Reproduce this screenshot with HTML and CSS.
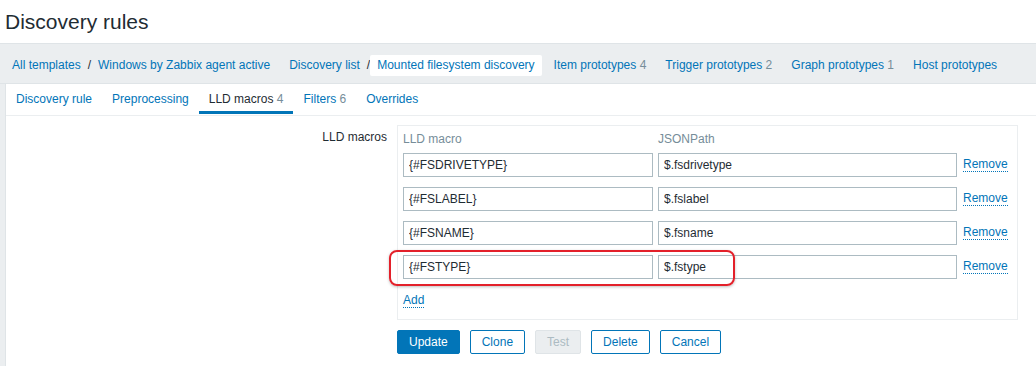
FILE: index.html
```html
<!DOCTYPE html>
<html lang="en">
<head>
    <meta charset="UTF-8">
    <title>Discovery rules</title>
    <link rel="stylesheet" href="styles.css">
</head>
<body>
    <header class="page-title">
        <h1>Discovery rules</h1>
    </header>

    <nav class="breadcrumbs">
        <ul>
            <li><a href="#">All templates</a></li>
            <li class="sep">/</li>
            <li><a href="#">Windows by Zabbix agent active</a></li>
        </ul>
        <ul>
            <li><a href="#">Discovery list</a></li>
            <li class="sep">/</li>
            <li class="selected"><a href="#">Mounted filesystem discovery</a></li>
        </ul>
        <ul>
            <li><a href="#">Item prototypes</a> <span class="count">4</span></li>
        </ul>
        <ul>
            <li><a href="#">Trigger prototypes</a> <span class="count">2</span></li>
        </ul>
        <ul>
            <li><a href="#">Graph prototypes</a> <span class="count">1</span></li>
        </ul>
        <ul>
            <li><a href="#">Host prototypes</a></li>
        </ul>
    </nav>

    <div class="wrapper">
        <div class="panel">
            <ul class="tabs">
                <li><a href="#">Discovery rule</a></li>
                <li><a href="#">Preprocessing</a></li>
                <li class="active"><a href="#">LLD macros</a> <span class="count">4</span></li>
                <li><a href="#">Filters</a> <span class="count">6</span></li>
                <li><a href="#">Overrides</a></li>
            </ul>

            <form class="form-grid" onsubmit="return false">
                <label class="form-label">LLD macros</label>
                <div class="macros-box">
                    <div class="macro-row macro-head">
                        <span>LLD macro</span>
                        <span>JSONPath</span>
                        <span></span>
                    </div>
                    <div class="macro-row">
                        <input type="text" value="{#FSDRIVETYPE}">
                        <input type="text" value="$.fsdrivetype">
                        <a href="#" class="link-action">Remove</a>
                    </div>
                    <div class="macro-row">
                        <input type="text" value="{#FSLABEL}">
                        <input type="text" value="$.fslabel">
                        <a href="#" class="link-action">Remove</a>
                    </div>
                    <div class="macro-row">
                        <input type="text" value="{#FSNAME}">
                        <input type="text" value="$.fsname">
                        <a href="#" class="link-action">Remove</a>
                    </div>
                    <div class="macro-row highlighted">
                        <input type="text" value="{#FSTYPE}">
                        <input type="text" value="$.fstype">
                        <a href="#" class="link-action">Remove</a>
                        <div class="highlight"></div>
                    </div>
                    <div class="add-row">
                        <a href="#" class="link-action">Add</a>
                    </div>
                </div>

                <div></div>
                <div class="buttons">
                    <button class="btn primary">Update</button>
                    <button class="btn">Clone</button>
                    <button class="btn" disabled>Test</button>
                    <button class="btn">Delete</button>
                    <button class="btn">Cancel</button>
                </div>
            </form>
        </div>
    </div>
</body>
</html>
```

FILE: styles.css
```css
body {
    margin: 0;
    font-family: "Liberation Sans", Arial, sans-serif;
    font-size: 12px;
    color: #1f2c33;
    background-color: #fff;
}
a {
    color: #0275b8;
    text-decoration: none;
}
ul {
    list-style: none;
    margin: 0;
    padding: 0;
}
.count {
    color: #768d99;
}

.page-title {
    height: 43px;
    padding: 0 5px;
    display: flex;
    align-items: center;
}
.page-title h1 {
    margin: 0;
    font-size: 21px;
    font-weight: normal;
    color: #1f2c33;
}

.breadcrumbs {
    display: flex;
    gap: 5px;
    background-color: #ebeef0;
    border-top: 1px solid #dfe4e7;
    border-bottom: 1px solid #dfe4e7;
    padding: 11px 5px 7px;
}
.breadcrumbs ul {
    display: flex;
}
.breadcrumbs li {
    height: 21px;
    line-height: 21px;
    padding: 0 7px;
}
.breadcrumbs li.sep {
    padding: 0;
    color: #1f2c33;
}
.breadcrumbs li.selected {
    background-color: #fff;
    border-radius: 2px;
}

.wrapper {
    background-color: #ebeef0;
    padding-left: 5px;
    height: 282px;
}
.panel {
    background-color: #fff;
    border-left: 1px solid #dfe4e7;
    height: 100%;
}

.tabs {
    display: flex;
    height: 31px;
    border-bottom: 1px solid #ebeef0;
}
.tabs li {
    padding: 0 10px;
    line-height: 29px;
    height: 30px;
    box-sizing: border-box;
    border-bottom: 3px solid transparent;
    margin-bottom: -1px;
    padding-top: 1px;
}
.tabs li.active {
    border-bottom-color: #0275b8;
}
.tabs li.active a {
    color: #1f2c33;
}

.form-grid {
    display: grid;
    grid-template-columns: 381px auto;
    column-gap: 10px;
    row-gap: 10px;
    padding-top: 9px;
    align-items: start;
}
.form-label {
    text-align: right;
    padding-top: 5px;
    line-height: 14px;
}

.macros-box {
    width: 609px;
    border: 1px solid #ebeef0;
    padding: 6px 5px 12px;
    display: flex;
    flex-direction: column;
    gap: 10px;
}
.macro-row {
    position: relative;
    display: grid;
    grid-template-columns: 250px 299px auto;
    column-gap: 5px;
    align-items: center;
}
.macro-head {
    color: #768d99;
    line-height: 14px;
    margin-bottom: -3px;
}
.macro-row input {
    height: 24px;
    box-sizing: border-box;
    border: 1px solid #acbbc2;
    padding: 0 5px;
    font-family: inherit;
    font-size: 12px;
    color: #1f2c33;
    background-color: #fff;
}
.link-action {
    justify-self: start;
    margin-left: 1px;
    border-bottom: 1px dotted #0275b8;
    line-height: 13px;
}
.add-row {
    padding-top: 4px;
    line-height: 14px;
}
.add-row .link-action {
    margin-left: 0;
}

.highlight {
    position: absolute;
    left: -14px;
    top: -5px;
    width: 346px;
    height: 36px;
    box-sizing: border-box;
    border: 2px solid #e3202a;
    border-radius: 8px;
    box-shadow: 0 1px 3px rgba(0, 0, 0, 0.25);
    pointer-events: none;
}

.buttons {
    display: flex;
    gap: 10px;
}
.btn {
    height: 24px;
    padding: 0 11px;
    font-family: inherit;
    font-size: 12px;
    color: #0275b8;
    background-color: #fff;
    border: 1px solid #0275b8;
    border-radius: 2px;
    cursor: pointer;
}
.btn.primary {
    color: #fff;
    background-color: #0275b8;
}
.btn:disabled {
    color: #acbbc2;
    background-color: #ebeef0;
    border-color: #dfe4e7;
    cursor: default;
}
```
